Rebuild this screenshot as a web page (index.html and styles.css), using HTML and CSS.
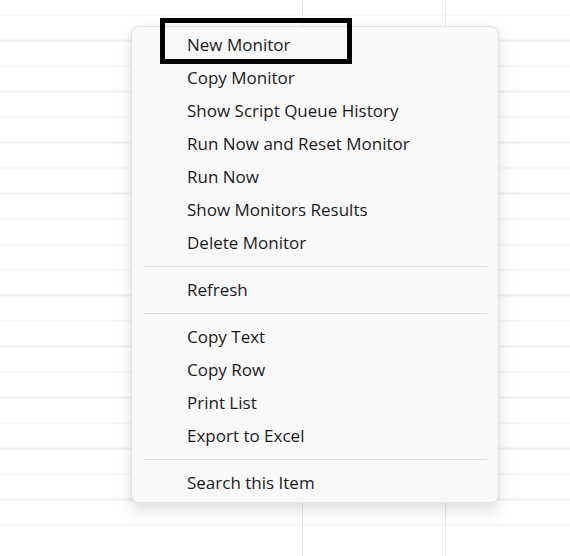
FILE: index.html
```html
<!DOCTYPE html>
<html>
<head>
<meta charset="utf-8">
<link rel="stylesheet" href="styles.css">
</head>
<body>
<div class="sheet">
  <div class="col col-a"></div>
  <div class="col col-b"></div>
  <div class="col col-c"></div>
</div>
<div class="menu">
  <div class="item">New Monitor</div>
  <div class="item">Copy Monitor</div>
  <div class="item">Show Script Queue History</div>
  <div class="item">Run Now and Reset Monitor</div>
  <div class="item">Run Now</div>
  <div class="item">Show Monitors Results</div>
  <div class="item">Delete Monitor</div>
  <div class="sep"></div>
  <div class="item">Refresh</div>
  <div class="sep"></div>
  <div class="item">Copy Text</div>
  <div class="item">Copy Row</div>
  <div class="item">Print List</div>
  <div class="item">Export to Excel</div>
  <div class="sep"></div>
  <div class="item">Search this Item</div>
</div>
<div class="mark"></div>
</body>
</html>
```
FILE: styles.css
```css
html, body {
  margin: 0;
  padding: 0;
  background: #ffffff;
}
body {
  width: 570px;
  height: 556px;
  overflow: hidden;
  position: relative;
  font-family: "Open Sans", "Noto Sans", sans-serif;
}
.sheet {
  display: flex;
  height: 556px;
  background-image: repeating-linear-gradient(
    to bottom,
    transparent 0px,
    transparent 24px,
    #efefef 24px,
    #efefef 25.5px
  );
  background-position: 0 -9.5px;
}
.col {
  height: 100%;
}
.col-a {
  width: 302px;
  border-right: 1px solid #e8e8e8;
}
.col-b {
  width: 142px;
  border-right: 1px solid #e8e8e8;
}
.col-c {
  flex: 1;
}
.menu {
  position: absolute;
  left: 131px;
  top: 26px;
  width: 366px;
  padding: 1px 0 3px 0;
  background: #f9f9f9;
  border: 1px solid #e2e2e2;
  border-radius: 8px;
  box-shadow: 0 8px 16px rgba(0, 0, 0, 0.12), 0 0 4px rgba(0, 0, 0, 0.04);
  display: flex;
  flex-direction: column;
}
.item {
  height: 33px;
  line-height: 33px;
  padding-left: 55px;
  font-size: 17px;
  color: #1b1b1b;
  white-space: nowrap;
}
.sep {
  height: 1px;
  background: #dcdcdc;
  margin: 7px 11px 6px 12px;
}
.mark {
  position: absolute;
  left: 160px;
  top: 18px;
  width: 192px;
  height: 46px;
  box-sizing: border-box;
  border: 5px solid #000000;
}
```
